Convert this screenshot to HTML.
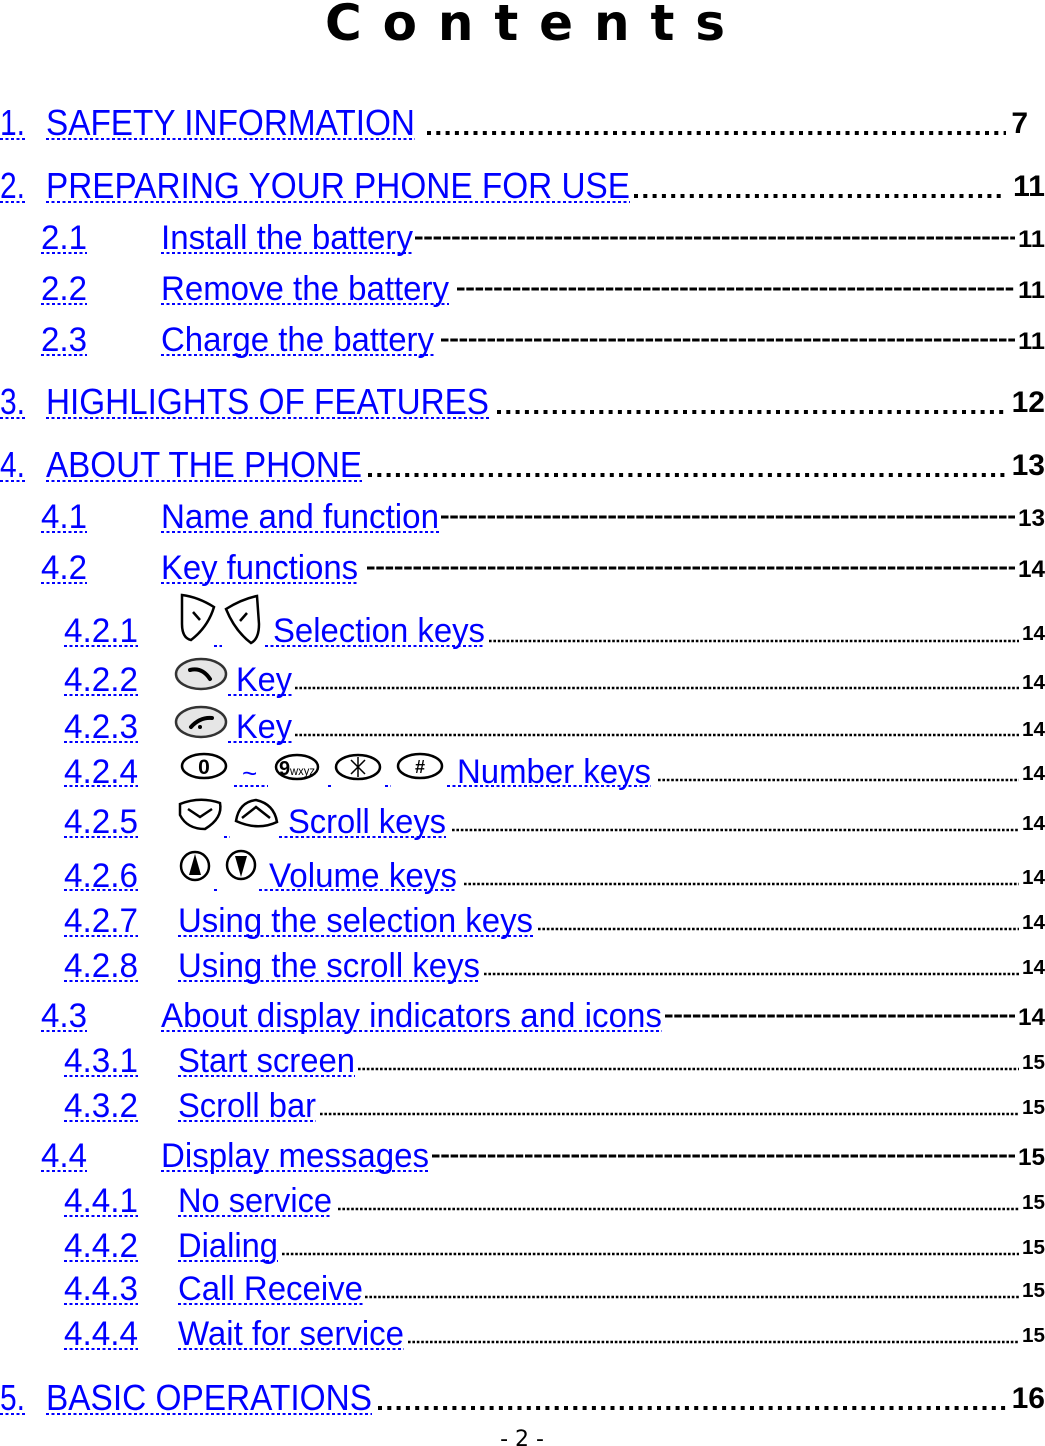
<!DOCTYPE html>
<html><head><meta charset="utf-8"><style>
html,body{margin:0;padding:0;background:#fff;}
svg{display:block;}
.b{fill:#0000ff;font-family:"Liberation Sans",Arial,sans-serif;}
.l1{font-size:36px;}
.l2{font-size:34px;}
.pn{font-family:"Liberation Sans",Arial,sans-serif;font-weight:bold;fill:#000;}
.u{stroke:#0000ff;stroke-width:2;stroke-dasharray:3,2.5;}
.dot1{stroke:#000;stroke-width:4;stroke-dasharray:4,5.3;}
.dash{stroke:#000;stroke-width:3;stroke-dasharray:7.5,1.8;}
.dot3{stroke:#000;stroke-width:2.6;stroke-dasharray:2.6,1.8;}
.ic{fill:none;stroke:#000;stroke-width:2.5;}
</style></head><body>
<svg width="1045" height="1446" viewBox="0 0 1045 1446" xmlns="http://www.w3.org/2000/svg">
<text x="325" y="40" textLength="400" lengthAdjust="spacing" style="font-family:'DejaVu Sans',sans-serif;font-weight:bold;font-size:50px;fill:#000">Contents</text>

<g class="b l1">
<text x="0" y="135" textLength="25" lengthAdjust="spacingAndGlyphs">1.</text>
<text x="46" y="135" textLength="369" lengthAdjust="spacingAndGlyphs">SAFETY INFORMATION</text>
<text x="0" y="198" textLength="25" lengthAdjust="spacingAndGlyphs">2.</text>
<text x="46" y="198" textLength="584" lengthAdjust="spacingAndGlyphs">PREPARING YOUR PHONE FOR USE</text>
<text x="0" y="414" textLength="25" lengthAdjust="spacingAndGlyphs">3.</text>
<text x="46" y="414" textLength="443" lengthAdjust="spacingAndGlyphs">HIGHLIGHTS OF FEATURES</text>
<text x="0" y="477" textLength="25" lengthAdjust="spacingAndGlyphs">4.</text>
<text x="46" y="477" textLength="316" lengthAdjust="spacingAndGlyphs">ABOUT THE PHONE</text>
<text x="0" y="1410" textLength="25" lengthAdjust="spacingAndGlyphs">5.</text>
<text x="46" y="1410" textLength="326" lengthAdjust="spacingAndGlyphs">BASIC OPERATIONS</text>
</g>
<g>
<line class="u" x1="0" y1="139" x2="25" y2="139"/><line class="u" x1="46" y1="139" x2="415" y2="139"/>
<line class="u" x1="0" y1="202" x2="25" y2="202"/><line class="u" x1="46" y1="202" x2="630" y2="202"/>
<line class="u" x1="0" y1="418" x2="25" y2="418"/><line class="u" x1="46" y1="418" x2="489" y2="418"/>
<line class="u" x1="0" y1="481" x2="25" y2="481"/><line class="u" x1="46" y1="481" x2="362" y2="481"/>
<line class="u" x1="0" y1="1414" x2="25" y2="1414"/><line class="u" x1="46" y1="1414" x2="372" y2="1414"/>
<line class="dot1" x1="427" y1="133" x2="1006" y2="133"/>
<line class="dot1" x1="634" y1="196" x2="1006" y2="196"/>
<line class="dot1" x1="497" y1="412" x2="1006" y2="412"/>
<line class="dot1" x1="368" y1="475" x2="1006" y2="475"/>
<line class="dot1" x1="378" y1="1408" x2="1006" y2="1408"/>
</g>
<g class="pn" style="font-size:30px">
<text x="1028" y="133" text-anchor="end">7</text>
<text x="1045" y="196" text-anchor="end" textLength="32" lengthAdjust="spacingAndGlyphs">11</text>
<text x="1045" y="412" text-anchor="end">12</text>
<text x="1045" y="475" text-anchor="end">13</text>
<text x="1045" y="1408" text-anchor="end">16</text>
</g>

<g class="b l2">
<text x="41" y="249" textLength="46" lengthAdjust="spacingAndGlyphs">2.1</text>
<text x="161" y="249" textLength="252" lengthAdjust="spacingAndGlyphs">Install the battery</text>
<text x="41" y="300" textLength="46" lengthAdjust="spacingAndGlyphs">2.2</text>
<text x="161" y="300" textLength="288" lengthAdjust="spacingAndGlyphs">Remove the battery</text>
<text x="41" y="351" textLength="46" lengthAdjust="spacingAndGlyphs">2.3</text>
<text x="161" y="351" textLength="273" lengthAdjust="spacingAndGlyphs">Charge the battery</text>
<text x="41" y="528" textLength="46" lengthAdjust="spacingAndGlyphs">4.1</text>
<text x="161" y="528" textLength="278" lengthAdjust="spacingAndGlyphs">Name and function</text>
<text x="41" y="579" textLength="46" lengthAdjust="spacingAndGlyphs">4.2</text>
<text x="161" y="579" textLength="197" lengthAdjust="spacingAndGlyphs">Key functions</text>
<text x="41" y="1027" textLength="46" lengthAdjust="spacingAndGlyphs">4.3</text>
<text x="161" y="1027" textLength="501" lengthAdjust="spacingAndGlyphs">About display indicators and icons</text>
<text x="41" y="1167" textLength="46" lengthAdjust="spacingAndGlyphs">4.4</text>
<text x="161" y="1167" textLength="268" lengthAdjust="spacingAndGlyphs">Display messages</text>
</g>
<g>
<line class="u" x1="41" y1="253" x2="87" y2="253"/><line class="u" x1="161" y1="253" x2="413" y2="253"/>
<line class="u" x1="41" y1="304" x2="87" y2="304"/><line class="u" x1="161" y1="304" x2="449" y2="304"/>
<line class="u" x1="41" y1="355" x2="87" y2="355"/><line class="u" x1="161" y1="355" x2="434" y2="355"/>
<line class="u" x1="41" y1="532" x2="87" y2="532"/><line class="u" x1="161" y1="532" x2="439" y2="532"/>
<line class="u" x1="41" y1="583" x2="87" y2="583"/><line class="u" x1="161" y1="583" x2="358" y2="583"/>
<line class="u" x1="41" y1="1031" x2="87" y2="1031"/><line class="u" x1="161" y1="1031" x2="662" y2="1031"/>
<line class="u" x1="41" y1="1171" x2="87" y2="1171"/><line class="u" x1="161" y1="1171" x2="429" y2="1171"/>
<line class="dash" x1="415" y1="238" x2="1015" y2="238"/>
<line class="dash" x1="457" y1="289" x2="1015" y2="289"/>
<line class="dash" x1="441" y1="340" x2="1015" y2="340"/>
<line class="dash" x1="441" y1="517" x2="1015" y2="517"/>
<line class="dash" x1="367" y1="568" x2="1015" y2="568"/>
<line class="dash" x1="665" y1="1016" x2="1015" y2="1016"/>
<line class="dash" x1="432" y1="1156" x2="1015" y2="1156"/>
</g>
<g class="pn" style="font-size:24px">
<text x="1045" y="247" text-anchor="end" textLength="27" lengthAdjust="spacingAndGlyphs">11</text>
<text x="1045" y="298" text-anchor="end" textLength="27" lengthAdjust="spacingAndGlyphs">11</text>
<text x="1045" y="349" text-anchor="end" textLength="27" lengthAdjust="spacingAndGlyphs">11</text>
<text x="1045" y="526" text-anchor="end" textLength="27" lengthAdjust="spacingAndGlyphs">13</text>
<text x="1045" y="577" text-anchor="end" textLength="27" lengthAdjust="spacingAndGlyphs">14</text>
<text x="1045" y="1025" text-anchor="end" textLength="27" lengthAdjust="spacingAndGlyphs">14</text>
<text x="1045" y="1165" text-anchor="end" textLength="27" lengthAdjust="spacingAndGlyphs">15</text>
</g>

<g class="b l2">
<text x="64" y="642" textLength="74" lengthAdjust="spacingAndGlyphs">4.2.1</text>
<text x="273" y="642" textLength="212" lengthAdjust="spacingAndGlyphs">Selection keys</text>
<text x="64" y="691" textLength="74" lengthAdjust="spacingAndGlyphs">4.2.2</text>
<text x="236" y="691" textLength="56" lengthAdjust="spacingAndGlyphs">Key</text>
<text x="64" y="738" textLength="74" lengthAdjust="spacingAndGlyphs">4.2.3</text>
<text x="236" y="738" textLength="56" lengthAdjust="spacingAndGlyphs">Key</text>
<text x="64" y="783" textLength="74" lengthAdjust="spacingAndGlyphs">4.2.4</text>
<text x="242" y="782" style="font-size:26px">~</text>
<text x="457" y="783" textLength="194" lengthAdjust="spacingAndGlyphs">Number keys</text>
<text x="64" y="833" textLength="74" lengthAdjust="spacingAndGlyphs">4.2.5</text>
<text x="288" y="833" textLength="158" lengthAdjust="spacingAndGlyphs">Scroll keys</text>
<text x="64" y="887" textLength="74" lengthAdjust="spacingAndGlyphs">4.2.6</text>
<text x="269" y="887" textLength="188" lengthAdjust="spacingAndGlyphs">Volume keys</text>
<text x="64" y="932" textLength="74" lengthAdjust="spacingAndGlyphs">4.2.7</text>
<text x="178" y="932" textLength="355" lengthAdjust="spacingAndGlyphs">Using the selection keys</text>
<text x="64" y="977" textLength="74" lengthAdjust="spacingAndGlyphs">4.2.8</text>
<text x="178" y="977" textLength="302" lengthAdjust="spacingAndGlyphs">Using the scroll keys</text>
<text x="64" y="1072" textLength="74" lengthAdjust="spacingAndGlyphs">4.3.1</text>
<text x="178" y="1072" textLength="177" lengthAdjust="spacingAndGlyphs">Start screen</text>
<text x="64" y="1117" textLength="74" lengthAdjust="spacingAndGlyphs">4.3.2</text>
<text x="178" y="1117" textLength="138" lengthAdjust="spacingAndGlyphs">Scroll bar</text>
<text x="64" y="1212" textLength="74" lengthAdjust="spacingAndGlyphs">4.4.1</text>
<text x="178" y="1212" textLength="154" lengthAdjust="spacingAndGlyphs">No service</text>
<text x="64" y="1257" textLength="74" lengthAdjust="spacingAndGlyphs">4.4.2</text>
<text x="178" y="1257" textLength="100" lengthAdjust="spacingAndGlyphs">Dialing</text>
<text x="64" y="1300" textLength="74" lengthAdjust="spacingAndGlyphs">4.4.3</text>
<text x="178" y="1300" textLength="185" lengthAdjust="spacingAndGlyphs">Call Receive</text>
<text x="64" y="1345" textLength="74" lengthAdjust="spacingAndGlyphs">4.4.4</text>
<text x="178" y="1345" textLength="226" lengthAdjust="spacingAndGlyphs">Wait for service</text>
</g>
<g>
<line class="u" x1="64" y1="646" x2="138" y2="646"/><line class="u" x1="265" y1="646" x2="485" y2="646"/><line class="u" x1="214" y1="646" x2="222" y2="646"/>
<line class="u" x1="64" y1="695" x2="138" y2="695"/><line class="u" x1="228" y1="695" x2="292" y2="695"/>
<line class="u" x1="64" y1="742" x2="138" y2="742"/><line class="u" x1="228" y1="742" x2="292" y2="742"/>
<line class="u" x1="64" y1="786" x2="138" y2="786"/><line class="u" x1="234" y1="786" x2="268" y2="786"/><line class="u" x1="328" y1="786" x2="332" y2="786"/><line class="u" x1="385" y1="786" x2="391" y2="786"/><line class="u" x1="447" y1="786" x2="651" y2="786"/>
<line class="u" x1="64" y1="837" x2="138" y2="837"/><line class="u" x1="224" y1="837" x2="230" y2="837"/><line class="u" x1="279" y1="837" x2="446" y2="837"/>
<line class="u" x1="64" y1="890" x2="138" y2="890"/><line class="u" x1="214" y1="890" x2="218" y2="890"/><line class="u" x1="259" y1="890" x2="457" y2="890"/>
<line class="u" x1="64" y1="936" x2="138" y2="936"/><line class="u" x1="178" y1="936" x2="533" y2="936"/>
<line class="u" x1="64" y1="981" x2="138" y2="981"/><line class="u" x1="178" y1="981" x2="480" y2="981"/>
<line class="u" x1="64" y1="1076" x2="138" y2="1076"/><line class="u" x1="178" y1="1076" x2="355" y2="1076"/>
<line class="u" x1="64" y1="1121" x2="138" y2="1121"/><line class="u" x1="178" y1="1121" x2="316" y2="1121"/>
<line class="u" x1="64" y1="1216" x2="138" y2="1216"/><line class="u" x1="178" y1="1216" x2="332" y2="1216"/>
<line class="u" x1="64" y1="1261" x2="138" y2="1261"/><line class="u" x1="178" y1="1261" x2="278" y2="1261"/>
<line class="u" x1="64" y1="1304" x2="138" y2="1304"/><line class="u" x1="178" y1="1304" x2="363" y2="1304"/>
<line class="u" x1="64" y1="1349" x2="138" y2="1349"/><line class="u" x1="178" y1="1349" x2="404" y2="1349"/>
<line class="dot3" x1="489" y1="641" x2="1019" y2="641"/>
<line class="dot3" x1="295" y1="688" x2="1019" y2="688"/>
<line class="dot3" x1="295" y1="735" x2="1019" y2="735"/>
<line class="dot3" x1="658" y1="780" x2="1019" y2="780"/>
<line class="dot3" x1="452" y1="830" x2="1019" y2="830"/>
<line class="dot3" x1="464" y1="884" x2="1019" y2="884"/>
<line class="dot3" x1="538" y1="929" x2="1019" y2="929"/>
<line class="dot3" x1="484" y1="974" x2="1019" y2="974"/>
<line class="dot3" x1="358" y1="1069" x2="1019" y2="1069"/>
<line class="dot3" x1="320" y1="1114" x2="1019" y2="1114"/>
<line class="dot3" x1="338" y1="1209" x2="1019" y2="1209"/>
<line class="dot3" x1="282" y1="1254" x2="1019" y2="1254"/>
<line class="dot3" x1="365" y1="1297" x2="1019" y2="1297"/>
<line class="dot3" x1="408" y1="1342" x2="1019" y2="1342"/>
</g>
<g class="pn" style="font-size:20px">
<text x="1045" y="640" text-anchor="end" textLength="23" lengthAdjust="spacingAndGlyphs">14</text>
<text x="1045" y="689" text-anchor="end" textLength="23" lengthAdjust="spacingAndGlyphs">14</text>
<text x="1045" y="736" text-anchor="end" textLength="23" lengthAdjust="spacingAndGlyphs">14</text>
<text x="1045" y="780" text-anchor="end" textLength="23" lengthAdjust="spacingAndGlyphs">14</text>
<text x="1045" y="830" text-anchor="end" textLength="23" lengthAdjust="spacingAndGlyphs">14</text>
<text x="1045" y="884" text-anchor="end" textLength="23" lengthAdjust="spacingAndGlyphs">14</text>
<text x="1045" y="929" text-anchor="end" textLength="23" lengthAdjust="spacingAndGlyphs">14</text>
<text x="1045" y="974" text-anchor="end" textLength="23" lengthAdjust="spacingAndGlyphs">14</text>
<text x="1045" y="1069" text-anchor="end" textLength="23" lengthAdjust="spacingAndGlyphs">15</text>
<text x="1045" y="1114" text-anchor="end" textLength="23" lengthAdjust="spacingAndGlyphs">15</text>
<text x="1045" y="1209" text-anchor="end" textLength="23" lengthAdjust="spacingAndGlyphs">15</text>
<text x="1045" y="1254" text-anchor="end" textLength="23" lengthAdjust="spacingAndGlyphs">15</text>
<text x="1045" y="1297" text-anchor="end" textLength="23" lengthAdjust="spacingAndGlyphs">15</text>
<text x="1045" y="1342" text-anchor="end" textLength="23" lengthAdjust="spacingAndGlyphs">15</text>
</g>

<!-- selection keys -->
<path class="ic" d="M182 595 Q198 597 214 607 Q208 627 191 640 Q182 638 182 624 Z"/>
<line class="ic" x1="193" y1="612" x2="200" y2="620"/>
<path class="ic" d="M257 596 Q242 599 226 609 Q235 631 251 643 Q259 639 259 624 Z"/>
<line class="ic" x1="247" y1="613" x2="240" y2="621"/>
<!-- call key -->
<ellipse cx="201" cy="674" rx="25" ry="15" fill="#e6e6e6" stroke="#333" stroke-width="2.5"/>
<path d="M190 670 Q202 667 210 679" fill="none" stroke="#000" stroke-width="4" stroke-linecap="round"/>
<!-- end key -->
<ellipse cx="201" cy="722" rx="25" ry="15" fill="#e6e6e6" stroke="#333" stroke-width="2.5"/>
<path d="M191 727 Q200 717 212 718" fill="none" stroke="#000" stroke-width="4" stroke-linecap="round"/>
<circle cx="200" cy="727" r="2" fill="#000"/>
<!-- number keys -->
<ellipse cx="204" cy="766" rx="22" ry="12" class="ic" stroke-width="1.8"/>
<text x="204" y="774" text-anchor="middle" style="font-family:'Liberation Sans',sans-serif;font-weight:bold;font-size:21px">0</text>
<ellipse cx="297" cy="767" rx="21" ry="12" class="ic" stroke-width="1.8"/>
<text x="279" y="775" style="font-family:'Liberation Sans',sans-serif;font-weight:bold;font-size:20px">9</text>
<text x="290" y="775" textLength="25" lengthAdjust="spacingAndGlyphs" style="font-family:'Liberation Sans',sans-serif;font-size:12px">wxyz</text>
<ellipse cx="358" cy="767" rx="22" ry="12" class="ic" stroke-width="1.8"/>
<path d="M351 760 L365 774 M365 760 L351 774 M358 757 L358 777" stroke="#000" stroke-width="1.5"/>
<ellipse cx="420" cy="766" rx="22" ry="12" class="ic" stroke-width="1.8"/>
<text x="420" y="773" text-anchor="middle" style="font-family:'Liberation Sans',sans-serif;font-weight:bold;font-size:18px">#</text>
<!-- scroll keys -->
<path class="ic" d="M180 804 Q200 796 220 803 Q223 818 205 829 Q187 829 180 815 Z"/>
<path class="ic" d="M188 809 L200 817 L212 809"/>
<path class="ic" d="M236 821 Q239 802 256 800 Q274 804 277 822 Q258 831 236 821 Z"/>
<path class="ic" d="M242 818 L256 807 L270 818"/>
<!-- volume keys -->
<circle cx="195" cy="866" r="14" class="ic" stroke-width="2.6"/>
<path d="M195 854 L201 875 L189 875 Z" fill="#000"/>
<circle cx="241" cy="865" r="14" class="ic" stroke-width="2.6"/>
<path d="M241 877 L247 856 L235 856 Z" fill="#000"/>

<text x="522" y="1446" text-anchor="middle" style="font-family:'DejaVu Sans',sans-serif;font-size:22px;fill:#000">- 2 -</text>
</svg>
</body></html>
